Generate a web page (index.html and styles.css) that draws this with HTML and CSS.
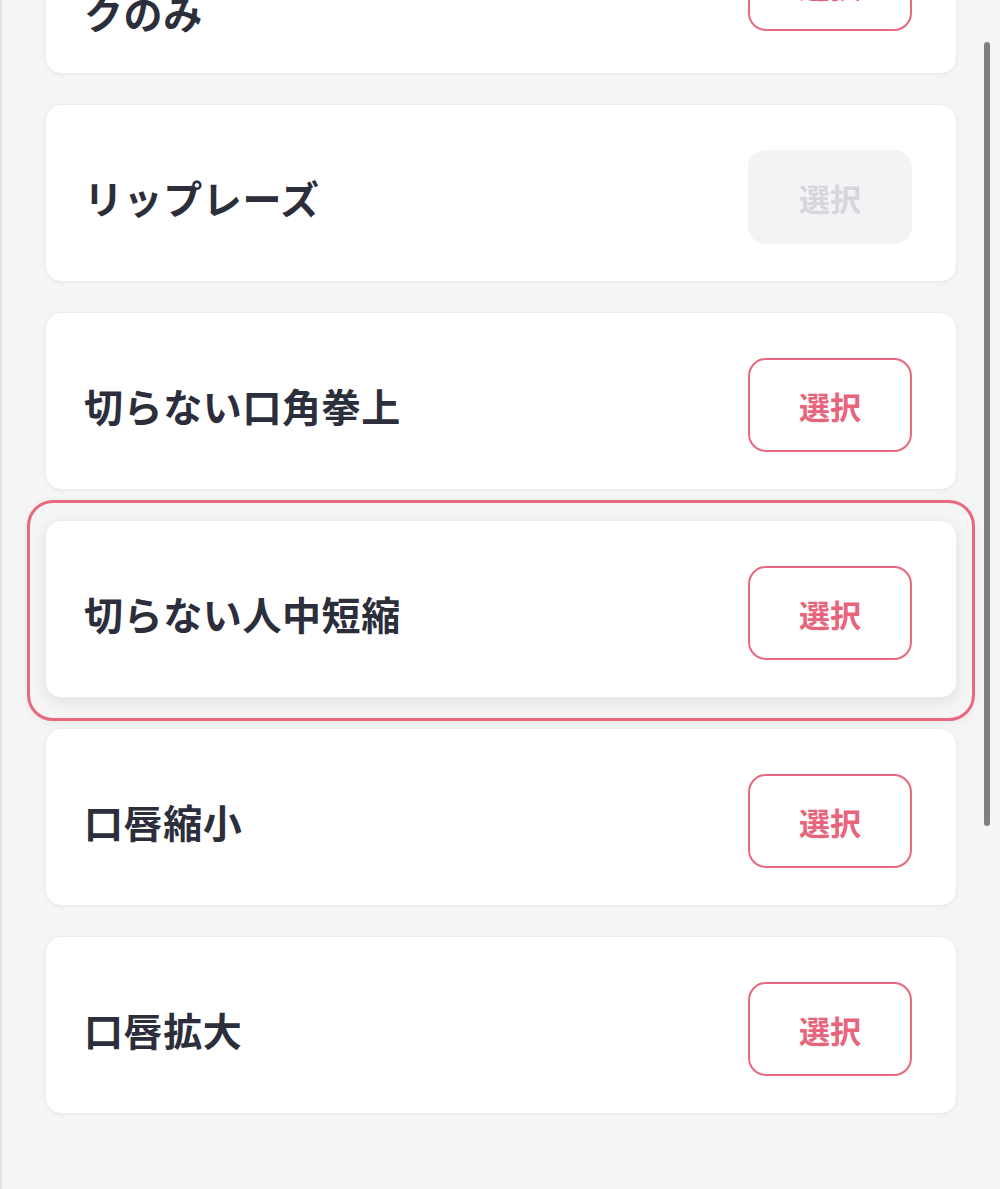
FILE: index.html
```html
<!DOCTYPE html>
<html lang="ja">
<head>
<meta charset="utf-8">
<title>メニュー選択</title>
<link rel="stylesheet" href="styles.css">
</head>
<body>
<div class="screen">
  <div class="list">
    <div class="card tall">
      <span class="title">ヒアルロン酸注入 リップピー<br>クのみ</span>
      <button class="select">選択</button>
    </div>
    <div class="card">
      <span class="title">リップレーズ</span>
      <button class="select disabled">選択</button>
    </div>
    <div class="card">
      <span class="title">切らない口角拳上</span>
      <button class="select">選択</button>
    </div>
    <div class="card selected">
      <span class="title">切らない人中短縮</span>
      <button class="select">選択</button>
    </div>
    <div class="card">
      <span class="title">口唇縮小</span>
      <button class="select">選択</button>
    </div>
    <div class="card">
      <span class="title">口唇拡大</span>
      <button class="select">選択</button>
    </div>
  </div>
  <div class="scrollbar"></div>
</div>
</body>
</html>
```
FILE: styles.css
```css
* { box-sizing: border-box; }
html, body {
  margin: 0;
  padding: 0;
  height: 100%;
  overflow: hidden;
}
body {
  background: #f5f5f5;
  font-family: "Noto Sans CJK JP", "Noto Sans", sans-serif;
}
.screen {
  position: relative;
  height: 1189px;
  overflow: hidden;
  border-left: 2px solid #e4e4e4;
  padding: 0 43px;
}
.list {
  display: flex;
  flex-direction: column;
  gap: 30px;
  margin-top: -114px;
}
.card {
  position: relative;
  height: 178px;
  background: #ffffff;
  border: 1px solid #ececec;
  border-radius: 16px;
  box-shadow: 0 1px 3px rgba(0, 0, 0, 0.04);
  display: flex;
  align-items: center;
  justify-content: space-between;
  padding: 8px 44px 0 38px;
}
.card.tall {
  height: 188px;
}
.card .title {
  font-size: 39px;
  font-weight: 700;
  color: #2c2f3b;
  line-height: 1.46;
  letter-spacing: 0.6px;
  white-space: nowrap;
}
.select {
  width: 164px;
  height: 94px;
  border: 2px solid #e8697f;
  border-radius: 18px;
  background: #ffffff;
  color: #e8647c;
  font-family: "Noto Sans CJK JP", sans-serif;
  font-size: 31px;
  font-weight: 700;
  padding: 0;
  flex: none;
}
.select.disabled {
  background: #f3f3f5;
  border-color: #f3f3f5;
  color: #d6d6dd;
}
.card.selected {
  box-shadow: 0 4px 14px rgba(0, 0, 0, 0.08);
}
.card.selected::after {
  content: "";
  position: absolute;
  top: -21px;
  left: -19px;
  right: -19px;
  bottom: -24px;
  border: 3px solid #e8697f;
  border-radius: 26px;
  box-shadow: 0 2px 8px rgba(0, 0, 0, 0.05);
  pointer-events: none;
}
.scrollbar {
  position: absolute;
  top: 42px;
  right: 10px;
  width: 6px;
  height: 784px;
  border-radius: 3px;
  background: #7f7f7f;
}
```
